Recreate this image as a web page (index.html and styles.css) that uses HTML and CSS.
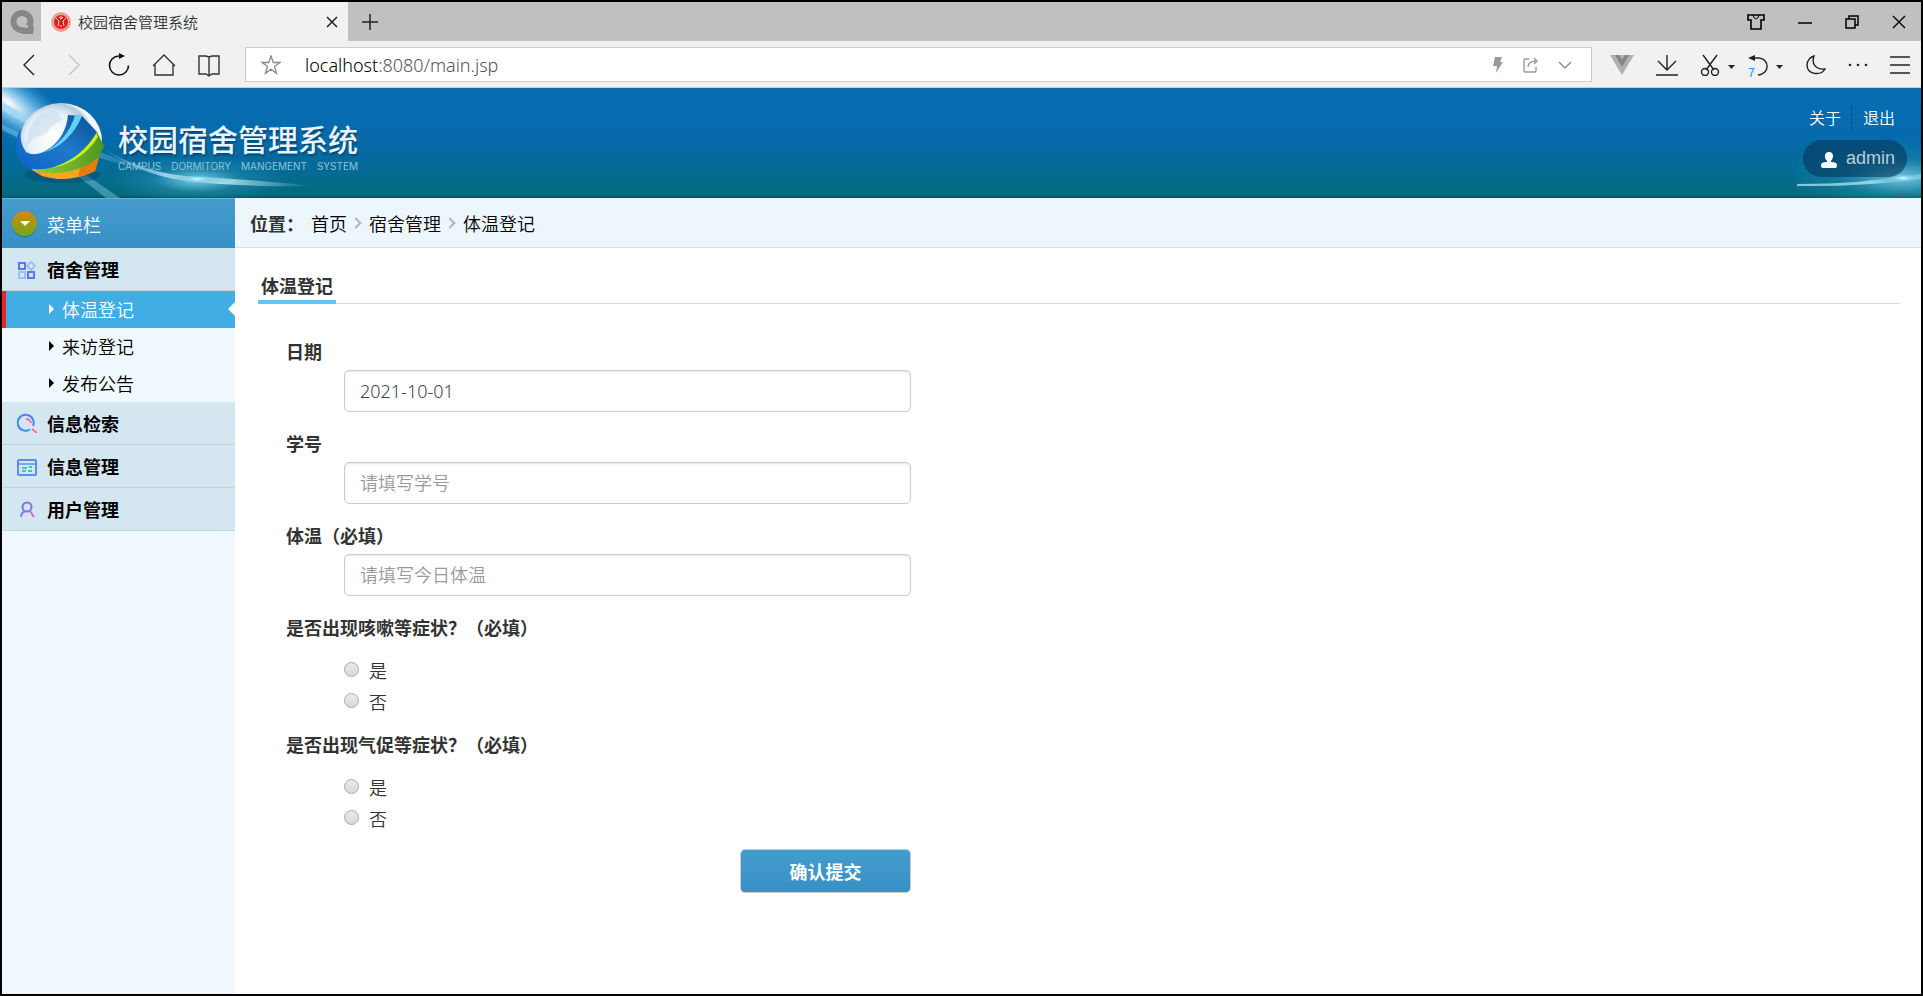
FILE: index.html
```html
<!DOCTYPE html>
<html lang="zh-CN">

<head>
  <meta charset="UTF-8">
  <meta name="viewport" content="width=device-width, initial-scale=1.0">
  <title>校园宿舍管理系统</title>
  <link rel="stylesheet" href="styles.css">
</head>

<body>
  <div class="window">
    <!-- 标签栏 -->
    <div class="tabbar">
      <div class="brand">
        <svg width="26" height="26" viewBox="0 0 26 26">
          <circle cx="13" cy="12.500" r="8.500" fill="none" stroke="#878787" stroke-width="6" />
          <path d="M12 18l6-4 7 4-1 7H13z" fill="#878787" />
          <path d="M12 18q0-3 4-4l3 3v2z" fill="#c0c0c0" />
        </svg>
      </div>
      <div class="tab">
        <svg class="favicon" width="20" height="20" viewBox="0 0 20 20">
          <circle cx="10" cy="10" r="10" fill="#f0b0a2" />
          <circle cx="10" cy="10" r="8.500" fill="none" stroke="#e0604e" stroke-dasharray="1 1" />
          <circle cx="10" cy="10" r="7" fill="#d9201c" />
          <path d="M5 6l3 3-1 5M15 6l-3 3 1 5M10 4v2M8 5l2 2 2-2M9 14h2" fill="none" stroke="#fbd8d2" />
        </svg>
        <span class="tab-title">校园宿舍管理系统</span>
        <button class="icon-btn tab-close" aria-label="关闭标签页">
          <svg width="12" height="12" viewBox="0 0 12 12" fill="none" stroke="#222" stroke-width="1.5">
            <path d="M1 1l10 10M11 1L1 11" />
          </svg>
        </button>
      </div>
      <button class="icon-btn tab-new" aria-label="新建标签页">
        <svg width="18" height="18" viewBox="0 0 18 18" fill="none" stroke="#222" stroke-width="1.5">
          <path d="M9 1v16M1 9h16" />
        </svg>
      </button>
      <div class="win-ctrl">
        <button class="icon-btn" aria-label="皮肤">
          <svg width="18" height="18" viewBox="0 0 18 18" fill="none" stroke="#000" stroke-width="1.6">
            <path d="M1 2h16v5h-3v9H4V7H1z" />
            <path d="M6 2q1 4 3 4t3-4" stroke-width="1" />
          </svg>
        </button>
        <button class="icon-btn" aria-label="最小化">
          <svg width="14" height="14" viewBox="0 0 14 14" fill="none" stroke="#000" stroke-width="1.5">
            <path d="M0 8h14" />
          </svg>
        </button>
        <button class="icon-btn" aria-label="还原">
          <svg width="14" height="14" viewBox="0 0 14 14" fill="none" stroke="#000" stroke-width="1.5">
            <path d="M1 4h9v9H1zM4 4V1h9v9h-3" />
          </svg>
        </button>
        <button class="icon-btn" aria-label="关闭">
          <svg width="14" height="14" viewBox="0 0 14 14" fill="none" stroke="#000" stroke-width="1.4">
            <path d="M1 1l12 12M13 1L1 13" />
          </svg>
        </button>
      </div>
    </div>

    <!-- 地址栏 -->
    <div class="toolbar">
      <div class="nav-btns">
        <button class="icon-btn" aria-label="后退">
          <svg width="24" height="24" viewBox="0 0 24 24" fill="none" stroke="#222" stroke-width="1.4">
            <path d="M17 2L7 12l10 10" />
          </svg>
        </button>
        <button class="icon-btn" aria-label="前进">
          <svg width="24" height="24" viewBox="0 0 24 24" fill="none" stroke="#c4c4c4" stroke-width="1.4">
            <path d="M7 2l10 10L7 22" />
          </svg>
        </button>
        <button class="icon-btn" aria-label="刷新">
          <svg width="24" height="24" viewBox="0 0 24 24" fill="none" stroke="#111" stroke-width="1.6">
            <path d="M14 3H12a9.500 9.500 0 1 0 9.500 9.500" />
            <path d="M12 0l6 3-6 3z" fill="#111" stroke="none" />
          </svg>
        </button>
        <button class="icon-btn" aria-label="主页">
          <svg width="24" height="24" viewBox="0 0 24 24" fill="none" stroke="#333" stroke-width="1.4">
            <path d="M1 13L12 2l11 11M3 11v11h18V11" />
          </svg>
        </button>
        <button class="icon-btn" aria-label="书签">
          <svg width="24" height="24" viewBox="0 0 24 24" fill="none" stroke="#333" stroke-width="1.4">
            <path d="M12 4L9 3H2v18h7l3 2 3-2h7V3h-7zM12 4v19" />
          </svg>
        </button>
      </div>
      <div class="address">
        <svg width="20" height="20" viewBox="0 0 20 20" fill="none" stroke="#888" stroke-width="1.3">
          <path d="M10 1l2.300 6.500H19l-5.500 4 2 6.800L10 14.200l-5.500 4.100 2-6.800L1 7.500h6.700z" />
        </svg>
        <div class="url"><span class="host">localhost</span>:8080/main.jsp</div>
        <svg width="12" height="18" viewBox="0 0 12 18" fill="#999">
          <path d="M3 1h7L8 6h3L4 17l1-7H1z" />
        </svg>
        <svg width="16" height="16" viewBox="0 0 16 16" fill="none" stroke="#999" stroke-width="1.4">
          <path d="M6 2H2L1 3v11l1 1h10l1-1v-4M5 10q0-6 9-6M11 1l3 3-3 3" />
        </svg>
        <svg width="14" height="10" viewBox="0 0 14 10" fill="none" stroke="#888" stroke-width="1.4">
          <path d="M1 2l6 6 6-6" />
        </svg>
      </div>
      <div class="tools">
        <button class="icon-btn" aria-label="Vue">
          <svg width="24" height="22" viewBox="0 0 24 22">
            <path d="M0 1h24L12 21z" fill="#b0b0b0" />
            <path d="M5 1h14l-7 12z" fill="#858585" />
            <path d="M9 1h6l-3 5z" fill="#b0b0b0" />
          </svg>
        </button>
        <button class="icon-btn" aria-label="下载">
          <svg width="22" height="22" viewBox="0 0 22 22" fill="none" stroke="#222" stroke-width="1.4">
            <path d="M11 1v15M2 7l9 9 9-9M0 21h22" />
          </svg>
        </button>
        <div class="tool-pair">
          <button class="icon-btn" aria-label="截图">
            <svg width="36" height="22" viewBox="0 0 36 22" fill="none" stroke="#222" stroke-width="1.4">
              <path d="M3 1l11 15M17 1L6 16" />
              <circle cx="5" cy="18" r="3.500" />
              <circle cx="15" cy="18" r="3.500" />
              <path d="M28 11h7l-3.500 4z" fill="#222" stroke="none" />
            </svg>
          </button>
          <button class="icon-btn undo" aria-label="撤销">
            <svg width="36" height="22" viewBox="0 0 36 22" fill="none" stroke="#222" stroke-width="1.4">
              <path d="M4 4h7c11 1 11 16-1 17" />
              <path d="M0 4l7-3v6z" fill="#222" stroke="none" />
              <path d="M28 11h7l-3.500 4z" fill="#222" stroke="none" />
            </svg>
            <span class="undo-num">7</span>
          </button>
        </div>
        <button class="icon-btn" aria-label="夜间模式">
          <svg width="20" height="22" viewBox="4 0 20 22" fill="none" stroke="#222" stroke-width="1.4">
            <path d="M12 2c-3 8 2 14 11 13-4 7-18 6-18-4 0-4 3-8 7-9z" />
          </svg>
        </button>
        <button class="icon-btn" aria-label="更多">
          <svg width="20" height="4" viewBox="0 0 20 4" fill="#222">
            <circle cx="2" cy="2" r="1.300" />
            <circle cx="10" cy="2" r="1.300" />
            <circle cx="18" cy="2" r="1.300" />
          </svg>
        </button>
        <button class="icon-btn" aria-label="菜单">
          <svg width="20" height="18" viewBox="0 0 20 18" fill="none" stroke="#222" stroke-width="1.5">
            <path d="M0 1h20M0 9h20M0 17h20" />
          </svg>
        </button>
      </div>
    </div>

    <!-- 页头 -->
    <header class="header">
      <svg class="header-left" width="400" height="110" viewBox="0 0 400 110">
        <defs>
          <radialGradient id="glow">
            <stop offset="0" stop-color="#e8fcff" />
            <stop offset="0.200" stop-color="#7cd4ec" stop-opacity="0.800" />
            <stop offset="0.500" stop-color="#3aa4c8" stop-opacity="0.400" />
            <stop offset="1" stop-color="#2a9cc0" stop-opacity="0" />
          </radialGradient>
          <radialGradient id="corner">
            <stop offset="0" stop-color="#fff" />
            <stop offset="0.400" stop-color="#8accf2" stop-opacity="0.800" />
            <stop offset="1" stop-color="#3aa0dc" stop-opacity="0" />
          </radialGradient>
          <linearGradient id="streak">
            <stop offset="0" stop-color="#8fd0f0" stop-opacity="0.200" />
            <stop offset="0.450" stop-color="#e4fbff" />
            <stop offset="1" stop-color="#7cd0e0" stop-opacity="0" />
          </linearGradient>
          <linearGradient id="ray">
            <stop offset="0" stop-color="#a8dcfa" stop-opacity="0.900" />
            <stop offset="1" stop-color="#3c9cd0" stop-opacity="0" />
          </linearGradient>
          <radialGradient id="ball" cx="0.400" cy="0.450">
            <stop offset="0" stop-color="#fff" />
            <stop offset="0.650" stop-color="#e6f0f8" />
            <stop offset="0.900" stop-color="#b4c9da" />
            <stop offset="1" stop-color="#f2f8fc" />
          </radialGradient>
          <linearGradient id="blue" x1="0" x2="1" y1="1" y2="0">
            <stop offset="0" stop-color="#0a62cc" />
            <stop offset="0.500" stop-color="#1e7ac8" />
            <stop offset="1" stop-color="#0c4f96" />
          </linearGradient>
          <linearGradient id="green">
            <stop offset="0" stop-color="#8cd43c" />
            <stop offset="0.600" stop-color="#6cb02c" />
            <stop offset="1" stop-color="#4c9420" />
          </linearGradient>
        </defs>
        <ellipse cx="6" cy="14" rx="90" ry="30" fill="url(#corner)" transform="rotate(35 6 14)" />
        <path d="M0 14C60 50 100 70 180 88C110 80 60 58 0 22z" fill="url(#ray)" />
        <path d="M0 36C40 56 80 84 118 110H104C76 88 40 60 0 42z" fill="#8fd8ec" opacity="0.400" />
        <ellipse cx="195" cy="92" rx="90" ry="26" fill="url(#glow)" opacity="0.800" />
        <path d="M100 60Q145 87 195 89T315 98Q240 99 195 94Q145 91 100 60z" fill="url(#streak)" />
        <ellipse cx="195" cy="91" rx="36" ry="8" fill="url(#glow)" />
        <ellipse cx="60" cy="87" rx="38" ry="8" fill="#054064" opacity="0.400" />
        <ellipse cx="59" cy="53" rx="41" ry="38" fill="url(#ball)" />
        <path d="M34 30q12-10 22-6l4 8-10 6-6 8-12 4-8 10q0-18 10-30z" fill="#c4d8ea" opacity="0.500" />
        <path d="M97 69L93 83Q66 96 40 88L30 82Q66 88 97 69z" fill="#f6a51c" />
        <path d="M97 69L93 83Q84 87 76 89L78 80z" fill="#e47c10" />
        <path d="M95 44L102 58 97 69Q68 92 29 82z" fill="url(#green)" />
        <path d="M94 44l2 5Q80 74 50 80 72 68 94 44z" fill="#d0ee14" />
        <path d="M66 27L80 28 95 44Q80 70 52 79 38 83 26 80 12 72 14 56 15 46 19 41 17 55 24 64 34 70 48 60 64 48 66 27z" fill="url(#blue)" />
        <path d="M41 65Q66 52 73 27l7 1Q68 56 41 65z" fill="#62d2f6" />
      </svg>
      <div class="logo-text">
        <h1>校园宿舍管理系统</h1>
        <p>CAMPUS DORMITORY MANGEMENT SYSTEM</p>
      </div>
      <svg class="header-right" width="124" height="110" viewBox="0 0 124 110">
        <ellipse cx="105" cy="90" rx="120" ry="38" fill="url(#glow)" opacity="0.700" />
        <path d="M0 96Q64 96 124 86V91Q64 99 0 98z" fill="#b8ecf8" opacity="0.700" />
        <ellipse cx="106" cy="90" rx="36" ry="9" fill="url(#glow)" />
      </svg>
      <div class="user-area">
        <div class="links">
          <a href="#">关于</a>
          <a href="#">退出</a>
        </div>
        <div class="user">
          <svg width="16" height="18" viewBox="0 0 16 18" fill="#fff">
            <path d="M8 2c5 0 5 6 2 9v1c4 0 6 1 6 3v1q0 2-2 2H2q-2 0-2-2v-1c0-2 2-3 6-3v-1C3 8 3 2 8 2z" />
          </svg>
          admin
        </div>
      </div>
    </header>

    <div class="body">
      <!-- 左侧菜单 -->
      <nav class="sidebar">
        <div class="menu-head">
          <span class="menu-ball"></span>
          菜单栏
        </div>
        <div class="menu-group">
          <svg width="20" height="20" viewBox="0 0 20 20" fill="none" stroke-width="2">
            <path d="M2 4h6v6H2zM11 13h6v6h-6z" stroke="#5a78ea" />
            <path d="M2 13h6v6H2zM14 3l4 4-4 4-4-4z" stroke="#a3bbf8" />
          </svg>
          宿舍管理
        </div>
        <ul class="menu-list">
          <li class="active"><a href="#">体温登记</a></li>
          <li><a href="#">来访登记</a></li>
          <li><a href="#">发布公告</a></li>
        </ul>
        <div class="menu-group">
          <svg width="20" height="20" viewBox="0 0 20 20" fill="none" stroke-width="2">
            <path d="M13 16.500A8 8 0 1 1 16 13" stroke="#3f86f6" />
            <path d="M9 6q4 0 5 4M15 16l5 4" stroke="#f46aa8" />
          </svg>
          信息检索
        </div>
        <div class="menu-group">
          <svg width="20" height="20" viewBox="0 0 20 20" fill="none" stroke-width="2">
            <rect x="1" y="4" width="18" height="15" rx="1" stroke="#5b8df0" />
            <path d="M1 8h18" stroke="#5b8df0" stroke-width="1.5" />
            <path d="M5 12h5M12 11h3M5 15h4M11 15h4" stroke="#3fc8b4" />
          </svg>
          信息管理
        </div>
        <div class="menu-group">
          <svg width="20" height="20" viewBox="0 0 20 20" fill="none" stroke-width="2">
            <circle cx="10" cy="8" r="4.500" stroke="#7f72f0" />
            <path d="M8 12q-4 2-4 6" stroke="#8a7cf0" />
            <path d="M13 12l4 6" stroke="#d765e4" />
          </svg>
          用户管理
        </div>
      </nav>

      <main class="main">
        <div class="place">
          <b>位置：</b>
          <ul>
            <li><a href="#">首页</a></li>
            <li><a href="#">宿舍管理</a></li>
            <li><a href="#">体温登记</a></li>
          </ul>
        </div>
        <div class="content">
          <div class="form-title"><span>体温登记</span></div>
          <form class="form">
            <div class="field">
              <label for="date">日期</label>
              <input type="text" id="date" value="2021-10-01">
            </div>
            <div class="field">
              <label for="sno">学号</label>
              <input type="text" id="sno" placeholder="请填写学号">
            </div>
            <div class="field">
              <label for="temp">体温（必填）</label>
              <input type="text" id="temp" placeholder="请填写今日体温">
            </div>
            <fieldset>
              <legend>是否出现咳嗽等症状？（必填）</legend>
              <label class="radio"><input type="radio" name="cough">是</label>
              <label class="radio"><input type="radio" name="cough">否</label>
            </fieldset>
            <fieldset>
              <legend>是否出现气促等症状？（必填）</legend>
              <label class="radio"><input type="radio" name="breath">是</label>
              <label class="radio"><input type="radio" name="breath">否</label>
            </fieldset>
            <button class="submit" type="button">确认提交</button>
          </form>
        </div>
      </main>
    </div>
  </div>
</body>

</html>
```
FILE: styles.css
```css
* {
  box-sizing: border-box;
}

body {
  margin: 0;
  font-family: "Noto Sans", "Noto Sans CJK SC", sans-serif;
  font-size: 18px;
  font-weight: 350;
  color: #000;
}

ul,
h1,
p {
  margin: 0;
  padding: 0;
  list-style: none;
}

a {
  color: inherit;
  text-decoration: none;
}

svg {
  display: block;
  flex-shrink: 0;
}

.window {
  display: flex;
  flex-direction: column;
  min-height: 100vh;
  border: 2px solid #000;
  background: #fff;
}

.icon-btn {
  display: flex;
  align-items: center;
  justify-content: center;
  padding: 0;
  border: 0;
  background: none;
}

/* 浏览器标签栏 */
.tabbar {
  display: flex;
  align-items: stretch;
  height: 39px;
  background: #c0c0c0;
}

.brand {
  display: flex;
  align-items: center;
  justify-content: center;
  width: 39px;
}

.tab {
  display: flex;
  align-items: center;
  width: 307px;
  padding: 0 10px;
  background: #f1f1f1;
}

.tab-title {
  margin-left: 7px;
  font-size: 15px;
  color: #333;
}

.tab-close {
  margin-left: auto;
}

.tab-new {
  width: 44px;
}

.win-ctrl {
  display: flex;
  gap: 33px;
  margin-left: auto;
  padding-right: 15px;
}

/* 地址栏 */
.toolbar {
  display: flex;
  align-items: center;
  height: 47px;
  padding: 1px 11px 0 0;
  border-bottom: 1px solid #ccc;
  background: #f1f1f1;
}

.nav-btns {
  display: flex;
  gap: 21px;
  padding: 0 24px 0 15px;
}

.address {
  display: flex;
  flex: 1;
  align-items: center;
  gap: 19px;
  height: 35px;
  padding: 0 19px 0 15px;
  border: 1px solid #ccc;
  background: #fff;
}

.url {
  flex: 1;
  padding-left: 5px;
  color: #555;
}

.host {
  color: #000;
}

.tools {
  display: flex;
  align-items: center;
  gap: 22px;
  padding-left: 18px;
}

.tool-pair {
  display: flex;
  gap: 12px;
}

.undo {
  position: relative;
}

.undo-num {
  position: absolute;
  left: 0;
  bottom: -4px;
  font-size: 12px;
  font-weight: 400;
  line-height: 14px;
  color: #1e90ff;
}

/* 页头 */
.header {
  position: relative;
  display: flex;
  justify-content: space-between;
  height: 110px;
  overflow: hidden;
  background: linear-gradient(#076cb0, #066aad 45%, #046b8c 85%, #04697a 97%, #035060);
}

.header-left {
  position: absolute;
  left: 0;
  top: 0;
}

.header-right {
  position: absolute;
  right: 0;
  top: 0;
}

.logo-text {
  position: relative;
  padding: 32px 0 0 116px;
}

.logo-text h1 {
  font-size: 30px;
  font-weight: 500;
  line-height: 40px;
  color: #e8f5fd;
  text-shadow: 1px 2px 2px #04456f;
}

.logo-text p {
  font-family: Inter, sans-serif;
  font-size: 10px;
  font-weight: 400;
  line-height: 12px;
  text-align-last: justify;
  color: #8fc4dc;
}

.user-area {
  position: relative;
  padding: 18px 14px 0 0;
  color: #fff;
}

.links {
  display: flex;
  justify-content: flex-end;
  padding-right: 12px;
  font-size: 16px;
  line-height: 24px;
}

.links a + a {
  margin-left: 10px;
  padding-left: 11px;
  border-left: 1px dotted #033c64;
}

.user {
  display: flex;
  align-items: center;
  gap: 9px;
  height: 37px;
  margin-top: 10px;
  padding: 0 12px 0 18px;
  border-radius: 19px;
  background: rgba(3, 55, 90, 0.6);
  font-family: "Liberation Sans", sans-serif;
  color: #b8ceda;
}

/* 页面主体 */
.body {
  display: flex;
  flex: 1;
}

.sidebar {
  width: 233px;
  background: #f0f9ff;
}

.menu-head {
  display: flex;
  align-items: center;
  gap: 10px;
  height: 50px;
  padding-left: 10px;
  border-top: 1px solid #5cb4e4;
  background: linear-gradient(#459ccd, #3790c6);
  color: #fff;
}

.menu-ball {
  display: flex;
  align-items: center;
  justify-content: center;
  width: 25px;
  height: 25px;
  border-radius: 50%;
  background: linear-gradient(#d8860c, #6fa81c);
  box-shadow: 0 1px 1px #2a6c94;
}

.menu-ball::before {
  content: "";
  border: 5px solid transparent;
  border-top-color: #fff;
  border-bottom: 0;
}

.menu-group {
  display: flex;
  align-items: center;
  gap: 10px;
  height: 43px;
  padding-left: 15px;
  border-bottom: 1px solid #c0d5de;
  background: #d4e7f0;
  font-weight: bold;
}

.menu-list li {
  display: flex;
  align-items: center;
  height: 37px;
  padding: 0 0 2px 47px;
}

.menu-list li::before {
  content: "";
  margin-right: 8px;
  border: 5px solid transparent;
  border-left-color: #000;
  border-right: 0;
}

.menu-list .active {
  padding-left: 43px;
  border-left: 4px solid #ee2028;
  background: #40aee2;
  color: #fff;
}

.menu-list .active::before {
  border-left-color: #fff;
}

.menu-list .active::after {
  content: "";
  margin-left: auto;
  border: 7px solid transparent;
  border-right-color: #fff;
  border-left: 0;
}

.main {
  flex: 1;
}

.place {
  display: flex;
  align-items: center;
  height: 50px;
  padding-left: 15px;
  border-bottom: 1px solid #d5e2e8;
  background: #edf6fc;
}

.place b {
  font-weight: bold;
  color: #333;
}

.place ul {
  display: flex;
  margin-left: 7px;
}

.place li {
  display: flex;
  align-items: center;
}

.place li + li::before {
  content: "";
  width: 6px;
  height: 6px;
  margin: 0 9px 0 5px;
  border: solid #a5bcc6;
  border-width: 2px 2px 0 0;
  transform: rotate(45deg);
}

.content {
  padding: 22px 21px 20px 23px;
}

.form-title {
  display: flex;
  height: 34px;
  border-bottom: 1px solid #d3dde5;
}

.form-title span {
  height: 34px;
  padding: 0 3px;
  border-bottom: 4px solid #60c6f2;
  font-weight: bold;
  line-height: 32px;
  color: #333;
}

/* 表单 */
.form {
  width: 653px;
  padding: 35px 0 0 28px;
  color: #333;
}

.field {
  margin-bottom: 19px;
  padding-left: 58px;
}

.field label,
legend {
  display: block;
  font-weight: bold;
  line-height: 26px;
}

.field label {
  margin: 0 0 5px -58px;
}

.field input {
  display: block;
  width: 100%;
  height: 42px;
  padding: 0 15px;
  border: 1px solid #ccc;
  border-radius: 5px;
  box-shadow: inset 0 1px 2px #e4e4e4;
  font: inherit;
  color: #444;
}

.field input::placeholder {
  color: #999;
}

fieldset {
  margin: 0 0 16px;
  padding: 13px 0 0 58px;
  border: 0;
}

legend {
  margin-left: -58px;
  padding: 0;
}

.radio {
  display: flex;
  align-items: center;
  gap: 10px;
  height: 31px;
}

.radio input {
  appearance: none;
  width: 15px;
  height: 15px;
  margin: 0;
  border: 1px solid #aaa;
  border-radius: 50%;
  background: linear-gradient(#eaeaea, #d9d9d9);
}

.radio input:checked {
  background: radial-gradient(#444 30%, #ddd 40%);
}

.submit {
  display: block;
  width: 171px;
  height: 44px;
  margin-left: auto;
  border: 1px solid #ccc;
  border-radius: 5px;
  background: linear-gradient(#459ccd, #3790c6);
  font: inherit;
  font-weight: bold;
  color: #fff;
}
```
